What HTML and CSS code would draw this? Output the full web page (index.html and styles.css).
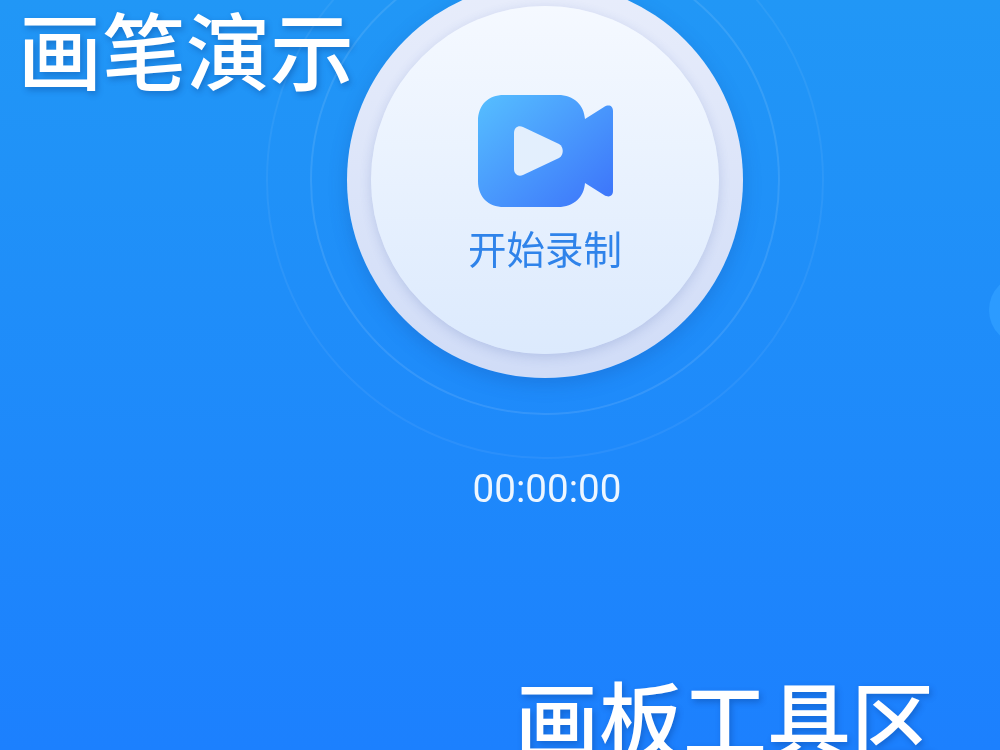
FILE: index.html
```html
<!DOCTYPE html>
<html lang="zh-CN">
<head>
    <meta charset="UTF-8">
    <title>画笔演示</title>
    <link rel="stylesheet" href="styles.css">
</head>
<body>
    <div class="screen">
        <div class="side-knob"></div>
        <div class="overlay-label label-top">画笔演示</div>

        <div class="recorder">
            <div class="ring ring-outer"></div>
            <div class="ring ring-inner"></div>
            <div class="record-disc">
                <div class="record-face">
                    <svg class="camera-icon" viewBox="0 0 136 112" width="136" height="112">
                        <defs>
                            <linearGradient id="cameraFill" x1="0" y1="0" x2="1" y2="1">
                                <stop offset="0" stop-color="#56bfff"/>
                                <stop offset="1" stop-color="#3c72fa"/>
                            </linearGradient>
                        </defs>
                        <path fill="url(#cameraFill)" d="M26 0H80C96 0 106 10 107 24L126 12C131 9 135 11 135 16V96C135 101 131 103 126 100L107 88C106 102 96 112 80 112H26C10 112 0 102 0 86V26C0 10 10 0 26 0Z"/>
                        <path fill="#e3effd" d="M36 38C36 33 40 30 45 32L81 49C86 52 86 60 81 63L45 80C40 82 36 79 36 74Z"/>
                    </svg>
                    <div class="record-label">开始录制</div>
                </div>
            </div>
        </div>

        <div class="timer">00:00:00</div>
        <div class="overlay-label label-bottom">画板工具区</div>
    </div>
</body>
</html>
```

FILE: styles.css
```css
* {
    margin: 0;
    padding: 0;
    box-sizing: border-box;
}

body {
    font-family: "Noto Sans CJK SC", "Noto Sans", sans-serif;
    overflow: hidden;
}

.screen {
    width: 1000px;
    height: 750px;
    position: relative;
    overflow: hidden;
    background: linear-gradient(180deg, #2197f6 0%, #1c80fe 100%);
    display: flex;
    flex-direction: column;
    padding-left: 347px;
    filter: blur(0.5px);
}

.overlay-label {
    position: absolute;
    font-size: 84px;
    line-height: 1;
    font-weight: 500;
    color: #fff;
    white-space: nowrap;
    text-shadow: 2px 3px 6px rgba(0, 40, 110, 0.3);
}

.label-top {
    left: 18px;
    top: 6px;
}

.label-bottom {
    left: 515px;
    top: 675px;
}

.recorder {
    width: 396px;
    height: 396px;
    margin-top: -18px;
    position: relative;
}

.ring {
    position: absolute;
    border-radius: 50%;
    border: 2px solid rgba(255, 255, 255, 0.1);
}

.ring-inner {
    inset: -37px;
}

.ring-outer {
    inset: -81px;
    border-color: rgba(255, 255, 255, 0.06);
}

.record-disc {
    width: 100%;
    height: 100%;
    position: relative;
    border-radius: 50%;
    background: linear-gradient(180deg, #e8edfb 0%, #d0dcf7 100%);
    box-shadow: 0 6px 18px rgba(20, 70, 160, 0.25);
    display: flex;
    align-items: center;
    justify-content: center;
}

.record-face {
    width: 348px;
    height: 348px;
    border-radius: 50%;
    background: linear-gradient(180deg, #f5f9ff 0%, #dceafd 100%);
    box-shadow: 0 3px 12px rgba(60, 90, 170, 0.2);
    display: flex;
    flex-direction: column;
    align-items: center;
    padding-top: 89px;
}

.camera-icon {
    display: block;
    margin-left: 2px;
}

.record-label {
    margin-top: 12px;
    font-size: 38.5px;
    line-height: 56px;
    color: #2f83ea;
}

.timer {
    width: 400px;
    margin-top: 89px;
    font-family: Roboto, sans-serif;
    font-size: 38.6px;
    line-height: 44px;
    color: rgba(255, 255, 255, 0.92);
    text-align: center;
}

.side-knob {
    position: absolute;
    left: 989px;
    top: 275px;
    width: 70px;
    height: 70px;
    border-radius: 50%;
    background: #2c9bff;
}
```
